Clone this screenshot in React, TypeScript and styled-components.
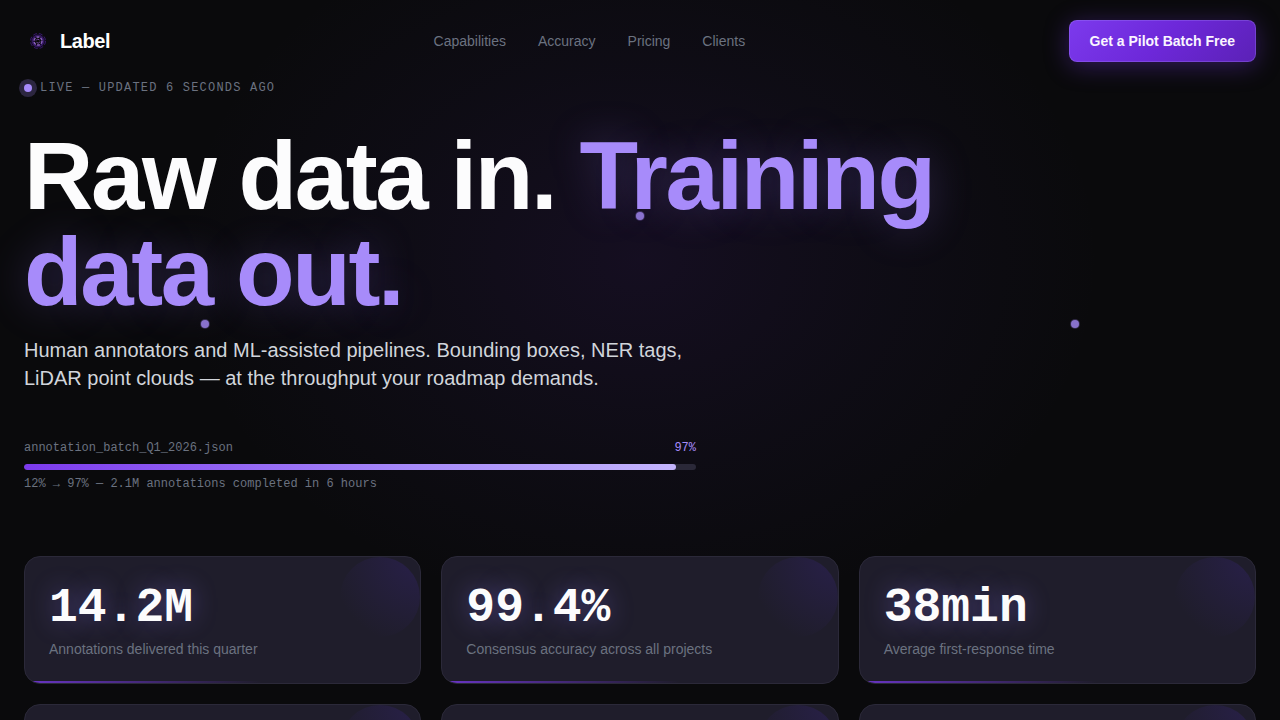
import React from "react";
import styled, { createGlobalStyle } from "styled-components";

const SANS = '"Liberation Sans", Arial, sans-serif';
const MONO = '"Liberation Mono", "Courier New", monospace';

const GlobalStyle = createGlobalStyle`
  *, *::before, *::after { box-sizing: border-box; }
  body { margin: 0; background: #0a0a0c; color: #fcfcfd; font-family: ${SANS}; }
  h1, p { margin: 0; }
`;

const Page = styled.div`
  position: relative;
  min-height: 100vh;
  padding: 20px 24px;
  overflow: hidden;
`;

const Backdrop = styled.div`
  position: absolute;
  inset: 0 0 auto;
  height: 100vh;
  pointer-events: none;
  background: radial-gradient(ellipse 36% 50% at 50% 36%, rgba(88, 40, 160, 0.14), rgba(80, 45, 160, 0.06) 55%, transparent);
`;

const NodeLayer = styled.div`
  position: absolute;
  inset: 0 0 auto;
  height: 100vh;
  pointer-events: none;
`;

const Node = styled.span<{ $x: number; $y: number }>`
  position: absolute;
  left: ${(p) => p.$x}%;
  top: ${(p) => p.$y}%;
  width: 8px;
  height: 8px;
  margin: -4px 0 0 -4px;
  border-radius: 50%;
  background: #a78bfa;
  opacity: 0.8;
  box-shadow: 0 0 0 1px rgba(167, 139, 250, 0.3);
`;

const Header = styled.header`
  position: relative;
  display: flex;
  align-items: center;
  justify-content: space-between;
`;

const Brand = styled.a`
  display: flex;
  align-items: center;
  gap: 8px;
  color: #fff;
  font-size: 20px;
  font-weight: 700;
  letter-spacing: -0.02em;
  text-decoration: none;
`;

const Nav = styled.nav`
  display: flex;
  gap: 32px;
`;

const NavLink = styled.a`
  color: #6b7280;
  font-size: 14px;
  text-decoration: none;
`;

const CtaButton = styled.button`
  padding: 12px 20px;
  border: 1px solid rgba(167, 139, 250, 0.3);
  border-radius: 8px;
  background: linear-gradient(135deg, #7c3aed, #6d28d9 50%, #5b21b6) border-box;
  color: #faf5ff;
  font: 700 14px/16px ${SANS};
  box-shadow: 0 4px 24px rgba(124, 58, 237, 0.35);
`;

const Hero = styled.section`
  position: relative;
  padding-top: 16px;
`;

const Live = styled.div`
  display: flex;
  align-items: center;
  gap: 8px;
  color: #6b7280;
  font: 12px/20px ${MONO};
  letter-spacing: 0.1em;
`;

const LiveDot = styled.span`
  width: 8px;
  height: 8px;
  border-radius: 50%;
  background: #a78bfa;
  box-shadow: 0 0 0 5px rgba(167, 139, 250, 0.22);
`;

const Title = styled.h1`
  max-width: 1024px;
  margin-top: 30px;
  font-size: 96px;
  line-height: 96px;
  letter-spacing: -0.025em;
`;

const Accent = styled.span`
  color: #a78bfa;
  text-shadow: 0 0 40px rgba(150, 120, 250, 0.26);
`;

const Lead = styled.p`
  max-width: 672px;
  margin-top: 16px;
  color: #d1d5db;
  font-size: 20px;
  line-height: 28px;
`;

const Batch = styled.div`
  max-width: 672px;
  margin-top: 46px;
  color: #6b7280;
  font: 12px/20px ${MONO};
`;

const BatchRow = styled.div`
  display: flex;
  justify-content: space-between;
`;

const Percent = styled.span`
  color: #a78bfa;
`;

const Track = styled.div`
  height: 6px;
  margin: 6px 0 4px;
  border-radius: 3px;
  background: #2a2838;
  overflow: hidden;
`;

const Fill = styled.div`
  height: 100%;
  border-radius: 3px;
  background: linear-gradient(90deg, #7c3aed, #a78bfa 60%, #c4b5fd);
`;

const Stats = styled.section`
  position: relative;
  display: grid;
  grid-template-columns: repeat(3, 1fr);
  gap: 20px;
  margin-top: 62px;
`;

const Card = styled.article`
  position: relative;
  min-height: 128px;
  padding: 24px;
  border: 1px solid #2b2939;
  border-radius: 16px;
  background: #1f1d2b;
  overflow: hidden;

  &::before {
    content: "";
    position: absolute;
    top: 0;
    right: 0;
    width: 80px;
    height: 80px;
    border-radius: 50%;
    background: radial-gradient(circle at 100% 0, rgba(67, 40, 160, 0.26), transparent 80%);
  }

  &::after {
    content: "";
    position: absolute;
    inset: auto 0 0;
    height: 2px;
    background: linear-gradient(90deg, #7c3aed, transparent 60%);
    opacity: 0.8;
  }
`;

const Value = styled.p`
  font: 700 48px/54px ${MONO};
  text-shadow: 0 0 24px rgba(139, 120, 250, 0.4);
`;

const Caption = styled.p`
  margin-top: 4px;
  color: #6b7280;
  font-size: 14px;
  line-height: 20px;
`;

const Mark = () => (
  <svg width="28" height="28" viewBox="0 0 28 28" fill="none" aria-hidden="true">
    <circle cx="14" cy="14" r="7.5" stroke="#5b21b6" strokeOpacity="0.55" strokeDasharray="4 2" />
    <circle cx="14" cy="14" r="5.5" stroke="#6d28d9" strokeOpacity="0.4" strokeWidth="2" />
    <circle cx="14" cy="14" r="4" stroke="#a070dc" strokeOpacity="0.85" strokeWidth="1.5" strokeDasharray="3 1.2" />
    <path d="M12 13.5l1.5-1.5 2 1M16 14.5l-1.5 1.8-2-1" stroke="#9058c8" strokeOpacity="0.8" />
  </svg>
);

const links = ["Capabilities", "Accuracy", "Pricing", "Clients"];
const nodes = [[50, 30], [16, 45], [84, 45]];
const stats = [
  { value: "14.2M", caption: "Annotations delivered this quarter" },
  { value: "99.4%", caption: "Consensus accuracy across all projects" },
  { value: "38min", caption: "Average first-response time" },
];
const progress = 97;

export default function App() {
  return (
    <Page>
      <GlobalStyle />
      <Backdrop />
      <Header>
        <Brand href="#"><Mark />Label</Brand>
        <Nav>
          {links.map((l) => <NavLink key={l} href={`#${l.toLowerCase()}`}>{l}</NavLink>)}
        </Nav>
        <CtaButton type="button">Get a Pilot Batch Free</CtaButton>
      </Header>
      <Hero>
        <Live><LiveDot />LIVE — UPDATED 6 SECONDS AGO</Live>
        <Title>Raw data in. <Accent>Training data out.</Accent></Title>
        <Lead>
          Human annotators and ML-assisted pipelines. Bounding boxes, NER tags, LiDAR point clouds — at the
          throughput your roadmap demands.
        </Lead>
        <Batch>
          <BatchRow><span>annotation_batch_Q1_2026.json</span><Percent>{progress}%</Percent></BatchRow>
          <Track><Fill style={{ width: `${progress}%` }} /></Track>
          <p>12% → 97% — 2.1M annotations completed in 6 hours</p>
        </Batch>
      </Hero>
      <Stats>
        {stats.map((s) => (
          <Card key={s.value}>
            <Value>{s.value}</Value>
            <Caption>{s.caption}</Caption>
          </Card>
        ))}
        <Card />
        <Card />
        <Card />
      </Stats>
      <NodeLayer>
        {nodes.map(([x, y]) => <Node key={x} $x={x} $y={y} />)}
      </NodeLayer>
    </Page>
  );
}
